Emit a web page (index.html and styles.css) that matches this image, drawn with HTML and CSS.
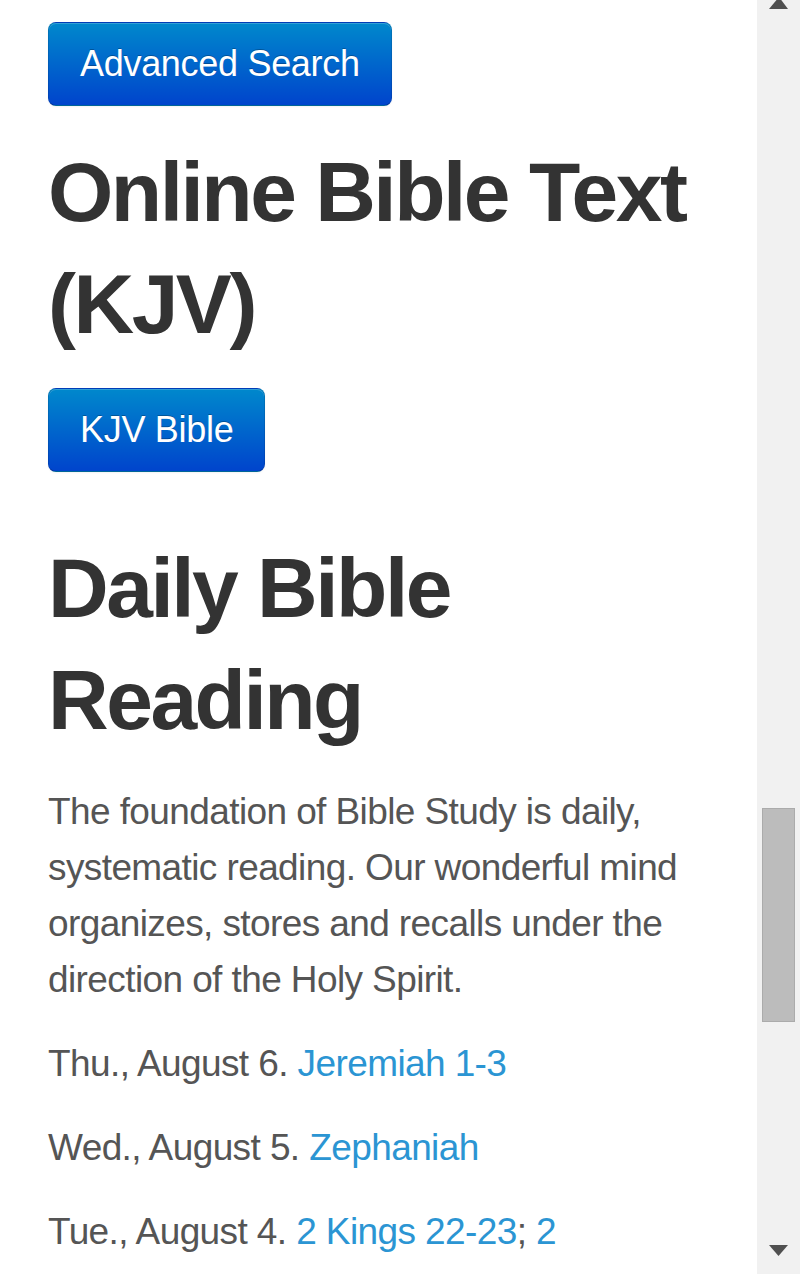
FILE: index.html
```html
<!DOCTYPE html>
<html lang="en">
<head>
    <meta charset="UTF-8">
    <meta name="viewport" content="width=device-width, initial-scale=1.0">
    <title>Online Bible Text (KJV)</title>
    <link rel="stylesheet" href="styles.css">
</head>
<body>

    <div class="viewport">
        <main class="page">
            <div class="actions">
                <a class="btn btn-primary" href="#">Advanced Search</a>
            </div>

            <h2>Online Bible Text (KJV)</h2>
            <div class="actions">
                <a class="btn btn-primary" href="#">KJV Bible</a>
            </div>

            <h2 class="section-title">Daily Bible Reading</h2>
            <p>The foundation of Bible Study is daily, systematic reading. Our wonderful mind organizes, stores and recalls under the direction of the Holy Spirit.</p>
            <p>Thu., August 6. <a href="#">Jeremiah 1-3</a></p>
            <p>Wed., August 5. <a href="#">Zephaniah</a></p>
            <p>Tue., August 4. <a href="#">2 Kings 22-23</a>; <a href="#">2</a></p>
        </main>

        <!-- scrollbar of the page pane -->
        <div class="scrollbar">
            <svg class="arrow" width="43" height="9" viewBox="0 0 43 9">
                <polygon points="22,-3 31,9 12,9" fill="#505050"/>
            </svg>
            <div class="thumb"></div>
            <svg class="arrow arrow-down" width="43" height="12" viewBox="0 0 43 12">
                <polygon points="12,0 31,0 21.5,11" fill="#505050"/>
            </svg>
        </div>
    </div>

</body>
</html>
```

FILE: styles.css
```css
html, body {
    margin: 0;
    height: 1280px;
    overflow: hidden;
    background-color: #fff;
}
body {
    font-family: "Liberation Sans", Arial, sans-serif;
    color: #333;
}
.viewport {
    display: flex;
    height: 1280px;
}
.page {
    flex: 1;
    padding: 22px 48px 0;
    overflow: hidden;
}
.actions {
    display: flex;
}
.btn {
    display: inline-block;
    padding: 21px 31px;
    font-size: 36px;
    line-height: 40px;
    letter-spacing: -0.3px;
    text-decoration: none;
    border-radius: 8px;
    border: 1px solid;
}
.btn-primary {
    color: #fff;
    text-shadow: 0 -1px 0 rgba(0,0,0,0.25);
    background-color: #006dcc;
    background-image: linear-gradient(to bottom, #0088cc, #0044cc);
    border-color: rgba(0,0,0,0.1) rgba(0,0,0,0.1) rgba(0,0,0,0.25);
    box-shadow: inset 0 1px 0 rgba(255,255,255,0.2), 0 1px 2px rgba(0,0,0,0.05);
}
h2 {
    font-size: 84px;
    line-height: 112px;
    letter-spacing: -2.5px;
    font-weight: bold;
    color: #333;
    margin: 30px 0 28px;
}
h2.section-title {
    margin-top: 60px;
}
p {
    font-size: 37px;
    line-height: 56px;
    letter-spacing: -0.6px;
    color: #555;
    margin: 0 0 28px;
}
p a {
    color: #2b95d3;
    text-decoration: none;
}
/* SCROLLBAR */
.scrollbar {
    width: 43px;
    height: 1274px;
    background-color: #f1f1f1;
    display: flex;
    flex-direction: column;
}
.arrow {
    display: block;
}
.thumb {
    margin: 799px 0 0 5px;
    width: 31px;
    height: 212px;
    background-color: #bcbcbc;
    border: 1px solid #ababab;
}
.arrow-down {
    margin-top: auto;
    margin-bottom: 17px;
}
```
